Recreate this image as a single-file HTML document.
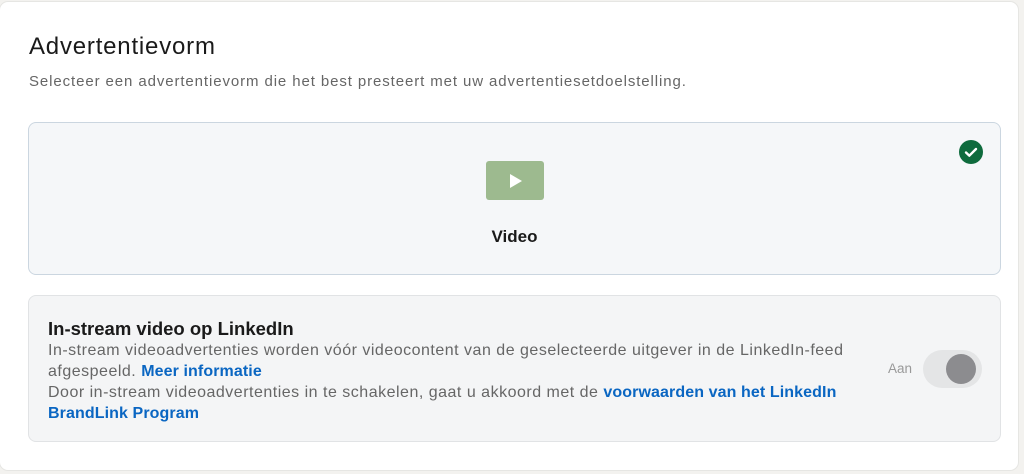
<!DOCTYPE html>
<html><head><meta charset="utf-8"><style>
html,body{margin:0;padding:0;background:#f3f2ef;width:1024px;height:474px;overflow:hidden;font-family:"Liberation Sans",sans-serif;}
.outer{position:absolute;left:0;top:2px;width:1018px;height:468px;background:#fff;border-radius:8px;box-shadow:0 0 0 1px #e6e6e3;}
h1{position:absolute;left:29px;top:33px;margin:0;font-size:24px;font-weight:normal;color:#1a1a1a;letter-spacing:0.8px;}
.sub{position:absolute;left:29px;top:73px;font-size:15px;letter-spacing:0.9px;color:#666;white-space:nowrap;}
.c1{position:absolute;left:28px;top:122px;width:971px;height:151px;background:#f5f7f9;border:1px solid #cbd6e0;border-radius:8px;}
.vid{position:absolute;left:457px;top:38px;width:58px;height:39px;background:#9dba8f;border-radius:3px;}
.vid:after{content:"";position:absolute;left:24px;top:13px;border-left:12px solid #fff;border-top:7px solid transparent;border-bottom:7px solid transparent;}
.vl{position:absolute;left:0;width:100%;top:104px;text-align:center;font-size:17px;font-weight:bold;color:#1a1a1a;}
.chk{position:absolute;left:930px;top:17px;width:24px;height:24px;border-radius:50%;background:#0e6b3d;}
.c2{position:absolute;left:28px;top:295px;width:971px;height:145px;background:#f4f5f6;border:1px solid #e1e3e5;border-radius:8px;}
.t{position:absolute;left:19px;top:22px;font-size:18.5px;font-weight:bold;color:#1a1a1a;white-space:nowrap;}
.p{position:absolute;left:19px;top:44px;font-size:16px;letter-spacing:0.5px;line-height:21px;color:#666;white-space:nowrap;}
.p b{color:#0a66c2;letter-spacing:0.1px;}
.aan{position:absolute;left:859px;top:65px;font-size:13.5px;color:#999;}
.tg{position:absolute;left:894px;top:54px;width:59px;height:38px;border-radius:19px;background:#e4e5e6;}
.tg:after{content:"";position:absolute;right:6px;top:4px;width:30px;height:30px;border-radius:50%;background:#8c8c8f;}
</style></head><body>
<div class="outer"></div>
<h1>Advertentievorm</h1>
<div class="sub">Selecteer een advertentievorm die het best presteert met uw advertentiesetdoelstelling.</div>
<div class="c1"><div class="vid"></div><div class="vl">Video</div>
<svg class="chk" viewBox="0 0 24 24"><path d="M7 12.5l3.3 3.2L17 9" fill="none" stroke="#fff" stroke-width="2.4" stroke-linecap="round" stroke-linejoin="round"/></svg></div>
<div class="c2"><div class="t">In-stream video op LinkedIn</div>
<div class="p">In-stream videoadvertenties worden vóór videocontent van de geselecteerde uitgever in de LinkedIn-feed<br>afgespeeld. <b>Meer informatie</b><br>Door in-stream videoadvertenties in te schakelen, gaat u akkoord met de <b>voorwaarden van het LinkedIn</b><br><b>BrandLink Program</b></div>
<div class="aan">Aan</div><div class="tg"></div></div>
</body></html>
